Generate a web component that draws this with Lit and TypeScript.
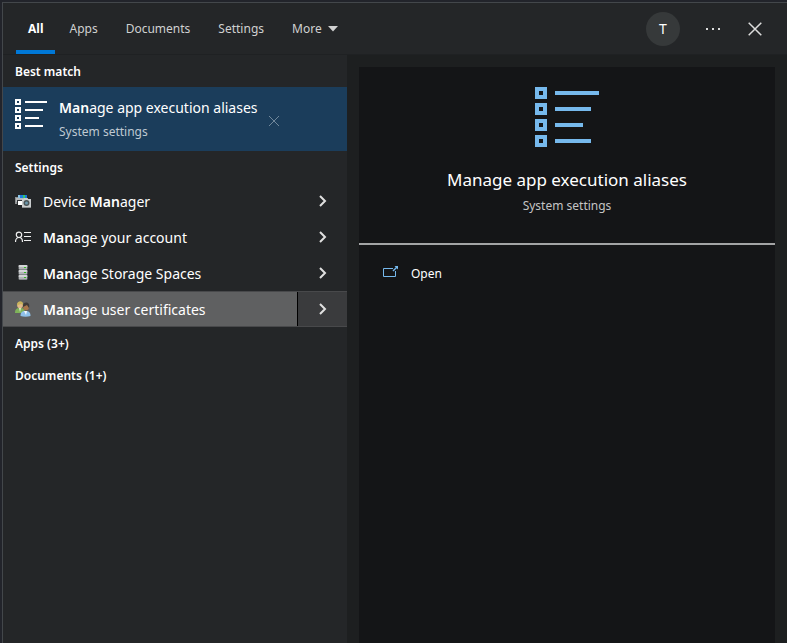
import { LitElement, html, css, svg } from "lit";
import { customElement, state } from "lit/decorators.js";

const aliasIcon = svg`
  <g fill="none" stroke="currentColor" stroke-width="4">
    <rect x="2" y="2" width="8" height="8" /><rect x="2" y="18" width="8" height="8" />
    <rect x="2" y="34" width="8" height="8" /><rect x="2" y="50" width="8" height="8" />
    <path d="M20 6H64M20 22H56M20 38H48M20 54H56" />
  </g>`;

const smallAliasIcon = svg`
  <g fill="none" stroke="currentColor" stroke-width="2" shape-rendering="crispEdges">
    <rect x="1" y="1" width="4" height="4" /><rect x="1" y="9" width="4" height="4" />
    <rect x="1" y="17" width="4" height="4" /><rect x="1" y="25" width="4" height="4" />
    <path d="M10 3H32M10 11H28M10 19H24M10 27H28" />
  </g>`;

const deviceIcon = svg`
  <path d="M0 4h5v1h-3v6h-2z" fill="#8d9092" />
  <path d="M1 5h12v4h-12z" fill="#b5b9bb" />
  <path d="M3 2h9v3h-9z" fill="#8ac4e8" />
  <path d="M5 2h3v3h-3z" fill="#1e7fe0" /><path d="M8 2h2v3h-2z" fill="#35c46a" /><path d="M10 2h2v3h-2z" fill="#1679d8" />
  <path d="M2 7h5v4h-5z" fill="#303336" /><path d="M3 8h4v4h-4z" fill="#fff" />
  <path d="M7 6h2v-1h3v1h4v9h-9z" fill="#c9cccd" />
  <path d="M7 14h9v1h-9z" fill="#8d9092" />
  <circle cx="11.500" cy="10" r="3" fill="#4a5558" /><circle cx="11.500" cy="10" r="1.500" fill="#6b97ab" />`;

const accountIcon = svg`
  <g fill="none" stroke="#f0f0f0" stroke-width="1.200">
    <circle cx="4" cy="5.800" r="2.700" /><path d="M.5 13c0-6 7-6 7 0" />
    <path d="M9 3.500h7M9 7.500h7M9 11.500h7" stroke-width="1" />
  </g>`;

const storageIcon = svg`
  ${[1, 6, 11].map(
    (y) => svg`
    <rect x="3.500" y=${y - 1} width="9" height="5" rx="1.500" fill="#85898c" />
    <rect x="3.500" y=${y - 1} width="9" height="2" rx="1" fill="#d4d6d8" />
    <rect x="4" y=${y + 1} width="8" height="2" fill="#b3b5b8" />
    <rect x="9" y=${y + 1} width="2" height="1" fill="#2fbf21" />`
  )}`;

const usersIcon = svg`
  <path d="M0 12c0-3 1-5 5-5s5 2 5 5z" fill="#7fb35a" /><path d="M4 7h2l-1 4z" fill="#e8f0d8" />
  <circle cx="5" cy="4.500" r="2.800" fill="#e3b98a" /><path d="M2 5c-1-6 7-6 6-1l-2-1-3 1z" fill="#c9b35c" />
  <path d="M5.500 15c0-3 1-5 5-5s5 2 5 5c-3 1-7 1-10 0z" fill="#8fc1ea" /><path d="M9 10h3l-1 4z" fill="#f4f8fc" />
  <circle cx="11" cy="6.500" r="2.800" fill="#a9764a" /><path d="M8 6c-1-6 8-6 6 1l-2-3z" fill="#3e3a38" />`;

const rows = [
  { id: "device", icon: deviceIcon, label: html`Device <b>Man</b>ager` },
  { id: "account", icon: accountIcon, label: html`<b>Man</b>age your account` },
  { id: "storage", icon: storageIcon, label: html`<b>Man</b>age Storage Spaces` },
  { id: "certs", icon: usersIcon, label: html`<b>Man</b>age user certificates` },
];

@customElement("app-root")
export class AppRoot extends LitElement {
  @state() private tab = "All";

  static styles = css`
    :host {
      display: flex;
      flex-direction: column;
      box-sizing: border-box;
      min-height: 100vh;
      padding: 2px 0 0 2px;
      background: #22242b;
      color: #fff;
      font: 12px/16px "Noto Sans", "Open Sans", sans-serif;
    }
    * { box-sizing: border-box; }
    button {
      display: flex;
      align-items: center;
      margin: 0;
      padding: 0;
      border: 0;
      background: none;
      color: inherit;
      font: inherit;
      text-align: left;
      cursor: pointer;
    }
    svg { display: block; flex: none; }
    b { font-weight: 600; }
    .window {
      flex: 1;
      display: flex;
      flex-direction: column;
      border: solid #43474b;
      border-width: 1px 0 0 1px;
      background: #1d1f20;
    }
    .top {
      display: flex;
      justify-content: space-between;
      height: 52px;
      background: #242628;
      border-bottom: 1px solid #1f2123;
    }
    .tabs { display: flex; padding-left: 13px; }
    .tab {
      padding: 0 14px;
      border: solid transparent;
      border-width: 4px 0;
      color: #d0d1d1;
      gap: 6px;
    }
    .tab.on { padding: 0 12px; border-bottom-color: #0078d7; color: #fff; font-weight: 700; }
    .tools { display: flex; align-items: center; padding-right: 11px; }
    .avatar {
      justify-content: center;
      width: 34px;
      height: 34px;
      border-radius: 50%;
      background: #36393a;
      font-size: 14px;
    }
    .tool { justify-content: center; width: 42px; height: 40px; color: #dcdcdc; }
    .tool.dots { margin-left: 12px; }
    .body { flex: 1; display: grid; grid-template-columns: 344px 1fr; }
    .list { background: #242628; }
    h2 {
      margin: 0;
      padding: 2px 12px 0;
      font-size: 12px;
      font-weight: 600;
      line-height: 30px;
    }
    .best { display: flex; height: 64px; background: #1b3d5b; }
    .best-main { gap: 12px; padding-left: 12px; align-items: flex-start; padding-top: 12px; }
    .best-name { display: block; font-size: 14px; line-height: 18px; }
    .kind { display: block; color: #bfc9d2; line-height: 16px; }
    .best .kind { margin-top: 7px; }
    .dismiss { padding: 4px 10px 0; color: #71889b; }
    .row { display: flex; height: 36px; }
    .row-main { flex: 1; gap: 12px; padding-left: 12px; font-size: 14px; }
    .row-main span { padding-top: 2px; }
    .more { justify-content: center; width: 49px; color: #e0e0e0; }
    .row.hot { background: #3a3b3d; border: solid #48494b; border-width: 1px 0; }
    .hot .row-main { background: #5f6061; border-right: 1px solid #000; }
    .preview { margin: 12px 12px 0; background: #141517; }
    .hero {
      display: flex;
      flex-direction: column;
      align-items: center;
      height: 178px;
      padding-top: 20px;
      border-bottom: 2px solid #a3a4a5;
      color: #76b9ed;
    }
    h1 { margin: 20px 0 5px; color: #fff; font-size: 17px; line-height: 26px; font-weight: 400; }
    .hero .kind { margin: 0; color: #c4c4c4; }
    .open { gap: 12px; width: 100%; padding: 0 24px; height: 56px; }
    .open span { padding-top: 2px; }
    .open svg { color: #76b9ed; }
  `;

  private icon(content: unknown, size = 16) {
    return html`<svg width=${size} height=${size} viewBox="0 0 16 16" aria-hidden="true">${content}</svg>`;
  }

  render() {
    return html`
      <div class="window">
        <header class="top">
          <nav class="tabs" aria-label="Result types">
            ${["All", "Apps", "Documents", "Settings", "More"].map(
              (t) => html`<button class="tab ${t === this.tab ? "on" : ""}" @click=${() => (this.tab = t)}>
                ${t}${t === "More"
                  ? html`<svg width="10" height="6" aria-hidden="true"><path d="M0 0h10L5 5.500z" fill="currentColor" /></svg>`
                  : ""}
              </button>`
            )}
          </nav>
          <div class="tools">
            <button class="avatar" aria-label="Account T">T</button>
            <button class="tool dots" aria-label="Options">
              <svg width="14" height="2"><path d="M0 0h2v2H0zM6 0h2v2H6zM12 0h2v2h-2z" fill="currentColor" /></svg>
            </button>
            <button class="tool" aria-label="Close">
              <svg width="14" height="14"><path d="M.7.7l12.600 12.600M13.300.7L.7 13.300" stroke="currentColor" stroke-width="1.500" /></svg>
            </button>
          </div>
        </header>
        <div class="body">
          <main class="list">
            <h2>Best match</h2>
            <div class="best">
              <button class="best-main">
                <svg width="32" height="30" aria-hidden="true">${smallAliasIcon}</svg>
                <span>
                  <span class="best-name"><b>Man</b>age app execution aliases</span>
                  <span class="kind">System settings</span>
                </span>
              </button>
              <button class="dismiss" aria-label="Dismiss">
                <svg width="12" height="12"><path d="M1 1l10 10M11 1L1 11" stroke="currentColor" /></svg>
              </button>
            </div>
            <h2>Settings</h2>
            ${rows.map(
              (r) => html`<div class="row ${r.id === "certs" ? "hot" : ""}">
                <button class="row-main">${this.icon(r.icon)}<span>${r.label}</span></button>
                <button class="more" aria-label="Show details">
                  <svg width="8" height="12"><path d="M1 1l5 5-5 5" fill="none" stroke="currentColor" stroke-width="2" /></svg>
                </button>
              </div>`
            )}
            <h2>Apps (3+)</h2>
            <h2>Documents (1+)</h2>
          </main>
          <section class="preview">
            <div class="hero">
              <svg width="64" height="60" aria-hidden="true">${aliasIcon}</svg>
              <h1>Manage app execution aliases</h1>
              <span class="kind">System settings</span>
            </div>
            <button class="open">
              <svg width="16" height="16" aria-hidden="true">
                <path d="M10 3.500H.5v8h12V6" fill="none" stroke="currentColor" />
                <path d="M10 6l4-4" stroke="currentColor" stroke-width="1.500" />
                <path d="M11.500 1H15v3.500z" fill="currentColor" />
              </svg>
              <span>Open</span>
            </button>
          </section>
        </div>
      </div>
    `;
  }
}
